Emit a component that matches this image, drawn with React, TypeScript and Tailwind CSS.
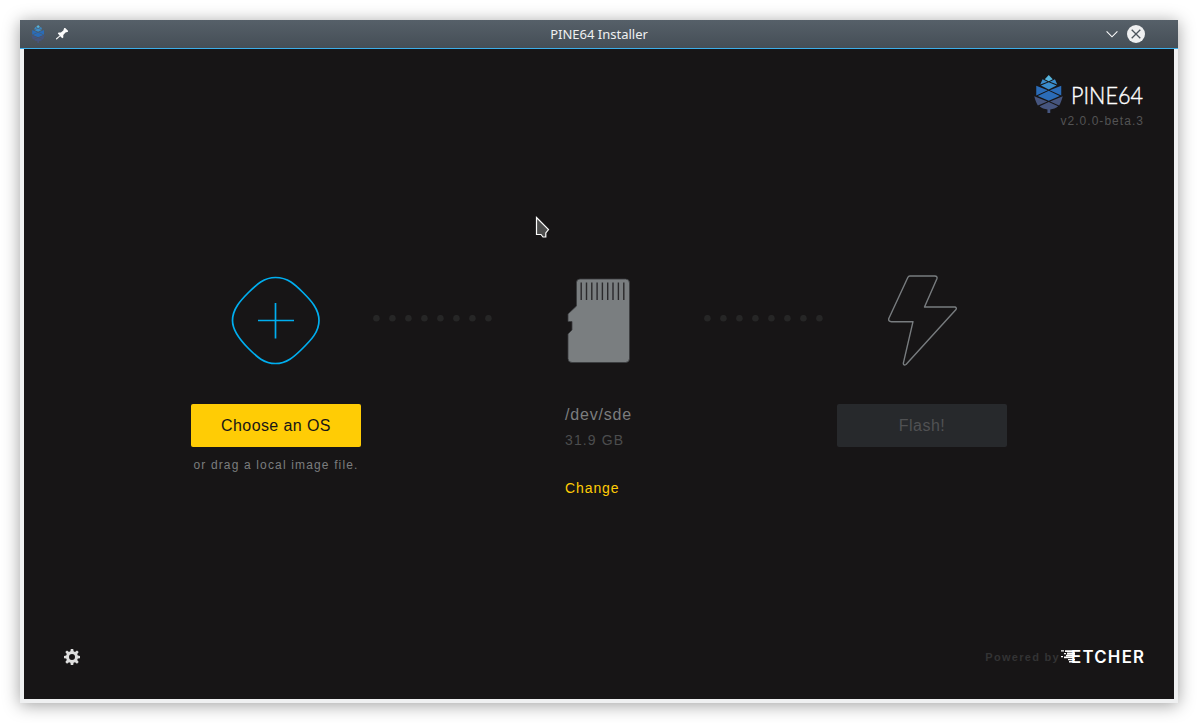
import React from 'react';

function PineCone({ className }: { className: string }) {
  return (
    <svg className={className} viewBox="0 0 28.500 38">
      <path fill="#56b4dc" d="M14.500 0l4 4.200-4 2-4-2z" />
      <path fill="#3a8ccb" d="M8.300 4.300l5 2.500L6 9.600zM20.700 4.300l-5 2.500L23 9.600zM14.500 7.200l7.800 3.300-7.800 3.900-7.800-3.900z" />
      <path fill="#2b6cb8" d="M2 10.700l11.500 4.500L2 20.400zM27 10.700l-11.500 4.500L27 20.400zM14.500 15.800l11 5.200-11 4.800-11-4.800z" />
      <path fill="#46557e" d="M0 21.200l13.200 5.300-9.600 4C2.200 28.200.8 24.600 0 21.200zM28.500 21.200l-12.700 5.300 9.100 4c1.400-2.200 2.800-5.900 3.600-9.300zM14.500 27l9.400 4.200c-2 1.800-5.200 2.900-7.900 3.200V38h-2.800v-3.600c-3-.3-5.900-1.400-7.900-3.200z" />
    </svg>
  );
}

function TitleBar() {
  return (
    <header className="flex h-[29px] shrink-0 items-center border-b border-[#3daee9] bg-linear-to-b from-[#566069] to-[#454e56]">
      <div className="flex flex-1 items-center">
        <PineCone className="ml-[11px] mt-[-1px] h-[18px] w-[14px]" />
        <svg className="ml-[11px] h-3 w-3" viewBox="0 0 12 12" fill="#fcfcfc">
          <path d="M8.200 0h1L12 2.800v1L9.500 4.600 7.300 7v2.500l-1 .7L4.200 8.200 1 11.300 0 11.500v-1L3.700 7.500 1.800 5.500l.8-1h2.300L7.300 2.500z" />
        </svg>
      </div>
      <span className="font-['Noto_Sans',sans-serif] text-[13px] leading-[18px] text-[#eff0f1]">PINE64 Installer</span>
      <div className="flex flex-1 items-center justify-end gap-[9px]">
        <svg className="h-3 w-3" viewBox="0 0 12 12" fill="none" stroke="#fcfcfc" strokeWidth="1.1">
          <path d="M0.600 3.400L6 8.800l5.400-5.400" />
        </svg>
        <svg className="mr-[33px] h-[18px] w-[18px]" viewBox="0 0 18 18">
          <circle cx="9" cy="9" r="9" fill="#eff0f1" />
          <path d="M4.700 4.700l8.600 8.600M13.300 4.700l-8.600 8.600" stroke="#4b545c" strokeWidth="1.300" />
        </svg>
      </div>
    </header>
  );
}

function Dots() {
  return (
    <svg className="mt-[41px] h-[7px] w-[119px]" viewBox="0 0 119 7" fill="#262626">
      {Array.from({ length: 8 }, (_, i) => (
        <circle key={i} cx={3.4 + i * 16} cy="3.200" r="3.300" />
      ))}
    </svg>
  );
}

function PlusIcon() {
  return (
    <svg className="h-[90px] w-[90px]" viewBox="0 0 90 90" fill="none" stroke="#00aeef" strokeWidth="1.700">
      <path d="M44.500 2.500C57 2.500 64 9.500 72 17.500C80 25.500 88 34 88 45.500C88 57 80 65 71.500 73.500C63 82 55.500 88.500 44.500 88.500C33 88.500 26 82 17.500 73.500C9 65 1.500 56 1.500 45.500C1.500 34 9.500 25.500 17.500 17.500C25.500 9.500 33 2.500 44.500 2.500Z" />
      <path d="M27 45.500h36M44.500 28v35.500" />
    </svg>
  );
}

function CardIcon() {
  return (
    <svg className="h-[90px] w-[66px]" viewBox="0 0 66 90">
      <path
        fill="#7a7e80"
        stroke="#3a3b3d"
        strokeWidth="0.8"
        d="M13 4h45.500a4 4 0 0 1 4 4v75.500a4 4 0 0 1-4 4H5a4 4 0 0 1-4-4V59l4-4V46.500H1V39l8.500-8V7.500A3.500 3.500 0 0 1 13 4z"
      />
      <path d="M14.200 7.500v17.500M19.500 7.500v17.500M24.800 7.500v17.500M30.100 7.500v17.500M35.400 7.500v17.500M40.700 7.500v17.500M46 7.500v17.500M51.400 7.500v17.500M56.800 7.500v17.500" stroke="#2a292b" strokeWidth="1.400" />
    </svg>
  );
}

function BoltIcon() {
  return (
    <svg className="mt-px h-[92px] w-[70px]" viewBox="0 0 70 92" fill="none" stroke="#787c7f" strokeWidth="1.400" strokeLinejoin="round">
      <path d="M22.800 1h25q3 .2 2 3L37.500 32H68q2 .7 1 2.500L19 89.500q-2.500 1.500-2.700-1.200L26 46.700H4.500q-3.500-.4-2.700-3.200L20.800 2.500Q21.500 1 22.800 1z" />
    </svg>
  );
}

function Brand() {
  return (
    <div className="flex flex-col items-end">
      <div className="flex items-end">
        <PineCone className="h-[38px] w-[29px]" />
        <svg className="mb-[2px] ml-[9px] mr-px h-[30px] w-[71px] overflow-visible" viewBox="0 0 71 30">
          <text x="-1" y="23" textLength="72" lengthAdjust="spacingAndGlyphs" fill="#ffffff" stroke="#ffffff" strokeWidth="0.400" className="font-['Lato',sans-serif] text-[23.500px] font-light">PINE64</text>
        </svg>
      </div>
      <span className="font-['Liberation_Sans',sans-serif] text-[12px] leading-4 tracking-[1.040px] text-[#535354]">v2.0.0-beta.3</span>
    </div>
  );
}

function EtcherLogo() {
  return (
    <svg className="h-6 w-[84px] overflow-visible" viewBox="0 0 84 24">
      <text x="11" y="17.500" textLength="73" lengthAdjust="spacing" fill="#fff" className="font-['Inter',sans-serif] text-[16.800px] font-semibold">ETCHER</text>
      <path fill="#fff" d="M1 5.200h3v1.200H1zM5 5.200h9v1.700H5zM4 8h2v1.300H4zM7 7.500h8v2H7zM6 9.700h9v1.500H6zM1 11h2v1.300H1zM4 11.500h10v1.800H4zM8 14h7v1.300H8zM9 16h6v1.500H9z" />
    </svg>
  );
}

export default function App() {
  return (
    <div className="relative h-[723px] w-[1198px] bg-white pl-5 pt-5 font-['Liberation_Sans',sans-serif]">
      <div className="flex h-[683px] w-[1158px] flex-col bg-[#eff0f1] shadow-[0_2px_16px_rgba(0,0,0,0.38)]">
        <TitleBar />
        <main className="mx-1 flex h-[650px] flex-col bg-[#171516]">
          <div className="flex h-[225px] justify-end pr-[30px] pt-[26px]">
            <Brand />
          </div>
          <div className="flex flex-1 pl-[167px]">
            <section className="flex w-[170px] flex-col items-center pt-[1px]">
              <PlusIcon />
              <button className="mt-[39px] h-[43px] w-[170px] rounded-[2px] bg-[#ffcc05] text-[16px] leading-5 tracking-[0.400px] text-[#171516]">Choose an OS</button>
              <p className="mt-[10px] whitespace-nowrap text-[12px] leading-4 tracking-[1.150px] text-[#7b7d7e]">or drag a local image file.</p>
            </section>
            <div className="ml-3"><Dots /></div>
            <section className="flex w-[212px] flex-col pl-[73px] pt-px">
              <div className="ml-[2px]"><CardIcon /></div>
              <p className="mt-[40px] text-[16px] leading-5 tracking-[0.800px] text-[#7b7d7e]">/dev/sde</p>
              <p className="mt-[6px] text-[14px] leading-[18px] tracking-[1.100px] text-[#4c4d4e]">31.9 GB</p>
              <a className="mt-[30px] text-[14px] leading-[18px] tracking-[0.900px] text-[#ffcc05]">Change</a>
            </section>
            <Dots />
            <section className="ml-[14px] flex w-[170px] flex-col items-center">
              <BoltIcon />
              <button className="mt-[37px] h-[43px] w-[170px] rounded-[2px] bg-[#27292c] text-[16px] leading-5 tracking-[0.500px] text-[#505153]">Flash!</button>
            </section>
          </div>
          <footer className="flex h-[54px] items-start justify-between pl-10 pr-[30px]">
            <svg className="mt-1 h-4 w-4 shrink-0" viewBox="0 0 16 16" fill="#dedede">
              <path fillRule="evenodd" d="M6.800 0h2.400l.4 2.300 1.400.6 2-1.500 1.700 1.700-1.500 2 .6 1.400 2.200.4v2.300l-2.200.4-.6 1.400 1.500 2-1.700 1.700-2-1.500-1.400.6L9.200 16H6.800l-.4-2.200-1.400-.6-2 1.500L1.300 13l1.500-2-.6-1.400L0 9.200V6.900l2.200-.4.6-1.400-1.500-2L3 1.400l2 1.500 1.400-.6zM8 5a3 3 0 1 0 0 6 3 3 0 0 0 0-6z" />
            </svg>
            <div className="flex items-center">
              <span className="text-[11px] font-bold leading-4 tracking-[1.300px] text-[#333334]">Powered by</span>
              <EtcherLogo />
            </div>
          </footer>
        </main>
      </div>
      <svg className="absolute left-[535px] top-[216px] h-[23px] w-[15px]" viewBox="0 0 15 23">
        <path d="M1.500 1.500l12 12-2.700 3.500V21H8L6 18.500H1.500z" fill="#4d4d4d" stroke="#fcfcfc" strokeWidth="1.200" />
      </svg>
    </div>
  );
}
